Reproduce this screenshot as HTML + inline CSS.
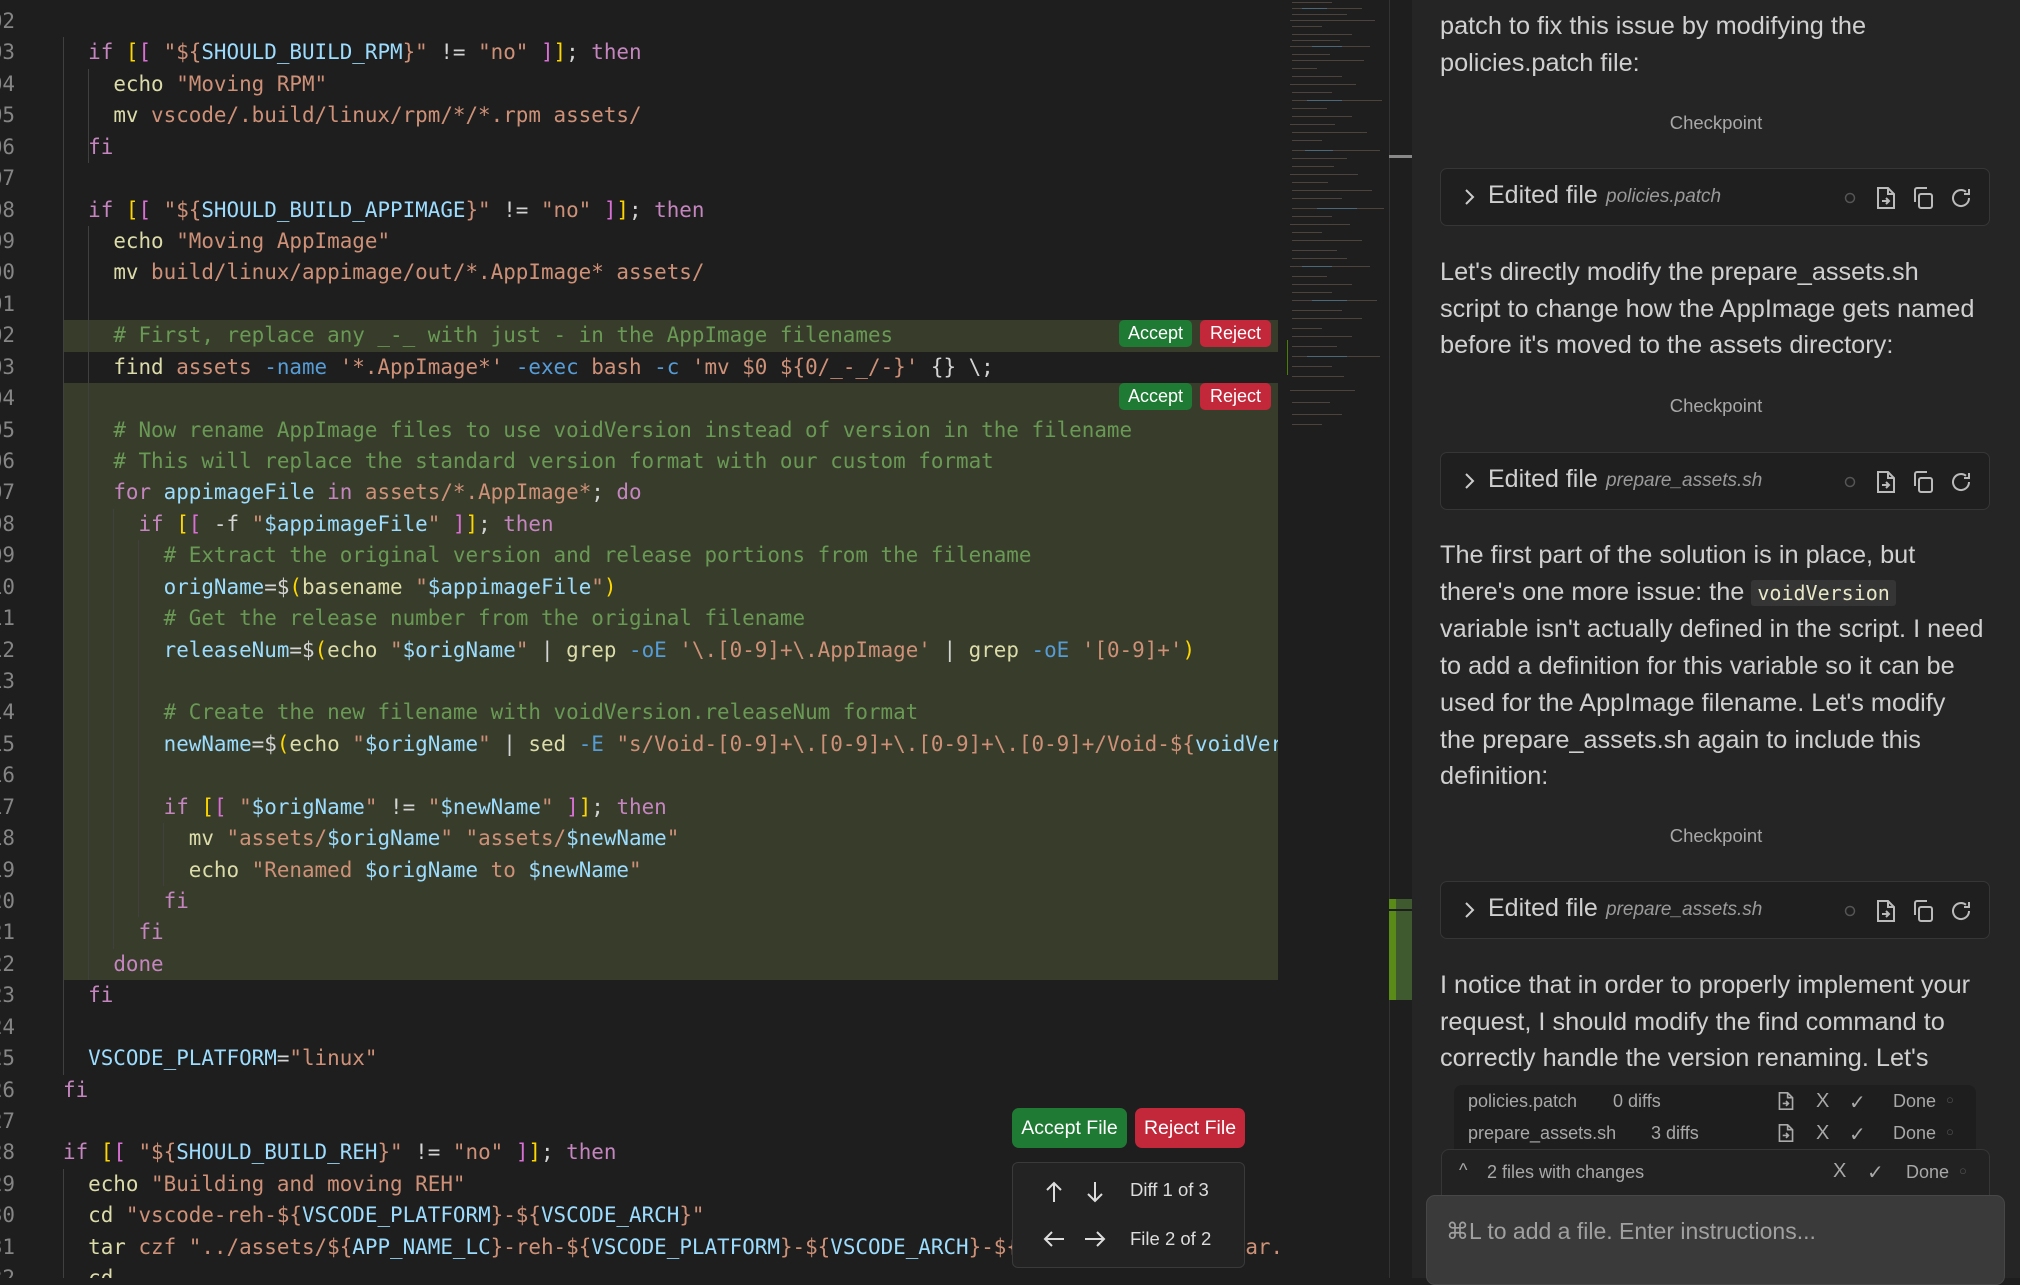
<!DOCTYPE html>
<html><head><meta charset="utf-8"><style>
*{margin:0;padding:0;box-sizing:border-box}
body{width:2020px;height:1278px;overflow:hidden;background:#1e1e1e;position:relative;font-family:"Liberation Sans",sans-serif}
.ed{position:absolute;left:0;top:0;width:1278px;height:1278px;overflow:hidden;background:#1e1e1e}
.row{position:absolute;left:0;width:1278px;height:31.43px;line-height:31.43px;font-family:"DejaVu Sans Mono",monospace;font-size:20.9px;white-space:pre;color:#d4d4d4}
.row .n{position:absolute;right:1263px;color:#858585;text-align:right}
.row .t{position:absolute;left:63px}
.hl{background:#373c2b}
.hl::before{content:"";position:absolute;left:0;width:63px;top:0;bottom:0;background:#1e1e1e}
.gb{position:absolute;left:25px;width:5px;background:#487e02}
.k{color:#c586c0}.s{color:#ce9178}.v{color:#9cdcfe}.c{color:#6a9955}.f{color:#dcdcaa}.o{color:#569cd6}.y{color:#ffd700}.p{color:#da70d6}
.guide{position:absolute;width:1px;background:#404040}
.btn{position:absolute;color:#fff;font-size:18px;text-align:center;border-radius:5px;line-height:27px;height:27px}
.ga{background:#1f7a34}.rr{background:#c3273a}
.panel{position:absolute;left:1412px;top:0;width:608px;height:1278px;background:#252526;color:#d0d0d0}
.p1{position:absolute;left:28px;font-size:25.3px;line-height:36.7px;white-space:nowrap}
.cp{position:absolute;left:0;width:608px;text-align:center;font-size:18.5px;color:#a8a8a8}
.card{position:absolute;left:28px;width:550px;height:58px;background:#1f1f1f;border:1px solid #363636;border-radius:7px}
.card .ch{position:absolute;left:22px;top:15px}
.card .ef{position:absolute;left:47px;top:12px;font-size:25px;color:#cfcfcf}
.card .fn{position:absolute;left:165px;top:17px;font-size:19px;font-style:italic;color:#9a9a9a}
.card svg.ic{position:absolute;top:17px}
.code{font-family:"DejaVu Sans Mono",monospace;font-size:20px;background:#353535;color:#e8e8c8;padding:1px 6px;border-radius:3px}
.fl{position:absolute;font-size:18px;color:#a8a8a8;white-space:nowrap}
</style></head><body>
<div class="ed">
<div class="gb" style="top:320px;height:32px"></div>
<div class="gb" style="top:383px;height:597px"></div>
<div class="row" style="top:6px"><span class="n">02</span></div>
<div class="row" style="top:37.4px"><span class="n">03</span><span class="t">  <span class="k">if</span> <span class="y">[</span><span class="p">[</span> <span class="s">"${</span><span class="v">SHOULD_BUILD_RPM</span><span class="s">}"</span> != <span class="s">"no"</span> <span class="p">]</span><span class="y">]</span>; <span class="k">then</span></span></div>
<div class="row" style="top:68.9px"><span class="n">04</span><span class="t">    <span class="f">echo</span> <span class="s">"Moving RPM"</span></span></div>
<div class="row" style="top:100.3px"><span class="n">05</span><span class="t">    <span class="f">mv</span> <span class="s">vscode/.build/linux/rpm/*/*.rpm assets/</span></span></div>
<div class="row" style="top:131.7px"><span class="n">06</span><span class="t">  <span class="k">fi</span></span></div>
<div class="row" style="top:163.2px"><span class="n">07</span></div>
<div class="row" style="top:194.6px"><span class="n">08</span><span class="t">  <span class="k">if</span> <span class="y">[</span><span class="p">[</span> <span class="s">"${</span><span class="v">SHOULD_BUILD_APPIMAGE</span><span class="s">}"</span> != <span class="s">"no"</span> <span class="p">]</span><span class="y">]</span>; <span class="k">then</span></span></div>
<div class="row" style="top:226px"><span class="n">09</span><span class="t">    <span class="f">echo</span> <span class="s">"Moving AppImage"</span></span></div>
<div class="row" style="top:257.4px"><span class="n">00</span><span class="t">    <span class="f">mv</span> <span class="s">build/linux/appimage/out/*.AppImage* assets/</span></span></div>
<div class="row" style="top:288.9px"><span class="n">01</span></div>
<div class="row hl" style="top:320.3px"><span class="n">02</span><span class="t">    <span class="c"># First, replace any _-_ with just - in the AppImage filenames</span></span></div>
<div class="row" style="top:351.7px"><span class="n">03</span><span class="t">    <span class="f">find</span> <span class="s">assets</span> <span class="o">-name</span> <span class="s">'*.AppImage*'</span> <span class="o">-exec</span> <span class="s">bash</span> <span class="o">-c</span> <span class="s">'mv $0 ${0/_-_/-}'</span> {} \;</span></div>
<div class="row hl" style="top:383.2px;height:597.2px"><span class="n">04</span></div>
<div class="row" style="top:414.6px"><span class="n">05</span><span class="t">    <span class="c"># Now rename AppImage files to use voidVersion instead of version in the filename</span></span></div>
<div class="row" style="top:446px"><span class="n">06</span><span class="t">    <span class="c"># This will replace the standard version format with our custom format</span></span></div>
<div class="row" style="top:477.4px"><span class="n">07</span><span class="t">    <span class="k">for</span> <span class="v">appimageFile</span> <span class="k">in</span> <span class="s">assets/*.AppImage*</span>; <span class="k">do</span></span></div>
<div class="row" style="top:508.9px"><span class="n">08</span><span class="t">      <span class="k">if</span> <span class="y">[</span><span class="p">[</span> -f <span class="s">"</span><span class="v">$appimageFile</span><span class="s">"</span> <span class="p">]</span><span class="y">]</span>; <span class="k">then</span></span></div>
<div class="row" style="top:540.3px"><span class="n">09</span><span class="t">        <span class="c"># Extract the original version and release portions from the filename</span></span></div>
<div class="row" style="top:571.7px"><span class="n">10</span><span class="t">        <span class="v">origName</span>=$<span class="y">(</span><span class="f">basename</span> <span class="s">"</span><span class="v">$appimageFile</span><span class="s">"</span><span class="y">)</span></span></div>
<div class="row" style="top:603.2px"><span class="n">11</span><span class="t">        <span class="c"># Get the release number from the original filename</span></span></div>
<div class="row" style="top:634.6px"><span class="n">12</span><span class="t">        <span class="v">releaseNum</span>=$<span class="y">(</span><span class="f">echo</span> <span class="s">"</span><span class="v">$origName</span><span class="s">"</span> | <span class="f">grep</span> <span class="o">-oE</span> <span class="s">'\.[0-9]+\.AppImage'</span> | <span class="f">grep</span> <span class="o">-oE</span> <span class="s">'[0-9]+'</span><span class="y">)</span></span></div>
<div class="row" style="top:666px"><span class="n">13</span></div>
<div class="row" style="top:697.4px"><span class="n">14</span><span class="t">        <span class="c"># Create the new filename with voidVersion.releaseNum format</span></span></div>
<div class="row" style="top:728.9px"><span class="n">15</span><span class="t">        <span class="v">newName</span>=$<span class="y">(</span><span class="f">echo</span> <span class="s">"</span><span class="v">$origName</span><span class="s">"</span> | <span class="f">sed</span> <span class="o">-E</span> <span class="s">"s/Void-[0-9]+\.[0-9]+\.[0-9]+\.[0-9]+/Void-${</span><span class="v">voidVersion</span></span></div>
<div class="row" style="top:760.3px"><span class="n">16</span></div>
<div class="row" style="top:791.7px"><span class="n">17</span><span class="t">        <span class="k">if</span> <span class="y">[</span><span class="p">[</span> <span class="s">"</span><span class="v">$origName</span><span class="s">"</span> != <span class="s">"</span><span class="v">$newName</span><span class="s">"</span> <span class="p">]</span><span class="y">]</span>; <span class="k">then</span></span></div>
<div class="row" style="top:823.2px"><span class="n">18</span><span class="t">          <span class="f">mv</span> <span class="s">"assets/</span><span class="v">$origName</span><span class="s">"</span> <span class="s">"assets/</span><span class="v">$newName</span><span class="s">"</span></span></div>
<div class="row" style="top:854.6px"><span class="n">19</span><span class="t">          <span class="f">echo</span> <span class="s">"Renamed </span><span class="v">$origName</span><span class="s"> to </span><span class="v">$newName</span><span class="s">"</span></span></div>
<div class="row" style="top:886px"><span class="n">20</span><span class="t">        <span class="k">fi</span></span></div>
<div class="row" style="top:917.4px"><span class="n">21</span><span class="t">      <span class="k">fi</span></span></div>
<div class="row" style="top:948.9px"><span class="n">22</span><span class="t">    <span class="k">done</span></span></div>
<div class="row" style="top:980.3px"><span class="n">23</span><span class="t">  <span class="k">fi</span></span></div>
<div class="row" style="top:1011.7px"><span class="n">24</span></div>
<div class="row" style="top:1043.2px"><span class="n">25</span><span class="t">  <span class="v">VSCODE_PLATFORM</span>=<span class="s">"linux"</span></span></div>
<div class="row" style="top:1074.6px"><span class="n">26</span><span class="t"><span class="k">fi</span></span></div>
<div class="row" style="top:1106px"><span class="n">27</span></div>
<div class="row" style="top:1137.4px"><span class="n">28</span><span class="t"><span class="k">if</span> <span class="y">[</span><span class="p">[</span> <span class="s">"${</span><span class="v">SHOULD_BUILD_REH</span><span class="s">}"</span> != <span class="s">"no"</span> <span class="p">]</span><span class="y">]</span>; <span class="k">then</span></span></div>
<div class="row" style="top:1168.9px"><span class="n">29</span><span class="t">  <span class="f">echo</span> <span class="s">"Building and moving REH"</span></span></div>
<div class="row" style="top:1200.3px"><span class="n">30</span><span class="t">  <span class="f">cd</span> <span class="s">"vscode-reh-${</span><span class="v">VSCODE_PLATFORM</span><span class="s">}-${</span><span class="v">VSCODE_ARCH</span><span class="s">}"</span></span></div>
<div class="row" style="top:1231.7px"><span class="n">31</span><span class="t">  <span class="f">tar</span> <span class="s">czf</span> <span class="s">"../assets/${</span><span class="v">APP_NAME_LC</span><span class="s">}-reh-${</span><span class="v">VSCODE_PLATFORM</span><span class="s">}-${</span><span class="v">VSCODE_ARCH</span><span class="s">}-${</span><span class="v">RELEASE_VERSION</span><span class="s">}.tar.gz"</span> .</span></div>
<div class="row" style="top:1263.2px"><span class="n">32</span><span class="t">  <span class="f">cd</span> ..</span></div>
<div class="guide" style="left:63px;top:37px;height:1038px"></div>
<div class="guide" style="left:88px;top:69px;height:94px"></div>
<div class="guide" style="left:88px;top:226px;height:754px"></div>
<div class="guide" style="left:113px;top:509px;height:440px"></div>
<div class="guide" style="left:138px;top:540px;height:377px"></div>
<div class="guide" style="left:163px;top:823px;height:63px"></div>
<div class="guide" style="left:63px;top:1169px;height:110px"></div>
<div class="btn ga" style="left:1119px;top:320px;width:73px">Accept</div>
<div class="btn rr" style="left:1200px;top:320px;width:71px">Reject</div>
<div class="btn ga" style="left:1119px;top:383px;width:73px">Accept</div>
<div class="btn rr" style="left:1200px;top:383px;width:71px">Reject</div>
<div class="btn ga" style="left:1012px;top:1108px;width:115px;height:40px;line-height:40px;font-size:19.5px;border-radius:7px">Accept File</div>
<div class="btn rr" style="left:1135px;top:1108px;width:110px;height:40px;line-height:40px;font-size:19.5px;border-radius:7px">Reject File</div>
<div style="position:absolute;left:1012px;top:1162px;width:233px;height:106px;background:#232323;border:1px solid #3a3a3a;border-radius:6px;color:#ddd;font-size:18.5px">
<svg style="position:absolute;left:31px;top:17px" width="20" height="24" viewBox="0 0 20 24" fill="none" stroke="#ddd" stroke-width="2"><path d="M10 22V3M3 10l7-7 7 7"/></svg>
<svg style="position:absolute;left:72px;top:17px" width="20" height="24" viewBox="0 0 20 24" fill="none" stroke="#ddd" stroke-width="2"><path d="M10 2v19M3 14l7 7 7-7"/></svg>
<span style="position:absolute;left:117px;top:16px">Diff 1 of 3</span>
<svg style="position:absolute;left:29px;top:66px" width="24" height="20" viewBox="0 0 24 20" fill="none" stroke="#ddd" stroke-width="2"><path d="M22 10H3M10 3l-7 7 7 7"/></svg>
<svg style="position:absolute;left:70px;top:66px" width="24" height="20" viewBox="0 0 24 20" fill="none" stroke="#ddd" stroke-width="2"><path d="M2 10h19M14 3l7 7-7 7"/></svg>
<span style="position:absolute;left:117px;top:65px">File 2 of 2</span>
</div>
</div>
<!-- minimap -->
<div style="position:absolute;left:1278px;top:0;width:134px;height:1278px;background:#1e1e1e">
<svg style="position:absolute;left:9px;top:0" width="100" height="440">
<g fill="#7a6a5a" opacity=".5">
<rect x="5" y="2" width="40" height="1"/><rect x="5" y="8" width="70" height="1"/><rect x="5" y="14" width="55" height="1"/><rect x="3" y="20" width="85" height="1"/><rect x="5" y="26" width="30" height="1"/><rect x="5" y="34" width="60" height="1"/><rect x="5" y="40" width="48" height="1"/><rect x="3" y="46" width="80" height="1"/><rect x="5" y="54" width="38" height="1"/><rect x="5" y="60" width="72" height="1"/><rect x="5" y="68" width="25" height="1"/><rect x="5" y="76" width="50" height="1"/><rect x="3" y="84" width="66" height="1"/><rect x="5" y="92" width="40" height="1"/><rect x="5" y="100" width="90" height="1"/><rect x="5" y="108" width="35" height="1"/><rect x="5" y="116" width="60" height="1"/><rect x="3" y="124" width="45" height="1"/><rect x="5" y="132" width="75" height="1"/><rect x="5" y="140" width="30" height="1"/><rect x="5" y="150" width="88" height="1"/><rect x="5" y="158" width="55" height="1"/><rect x="5" y="166" width="42" height="1"/><rect x="3" y="174" width="68" height="1"/><rect x="5" y="182" width="36" height="1"/><rect x="5" y="190" width="80" height="1"/><rect x="5" y="198" width="50" height="1"/><rect x="5" y="208" width="92" height="1"/><rect x="5" y="216" width="40" height="1"/><rect x="3" y="224" width="60" height="1"/><rect x="5" y="232" width="30" height="1"/><rect x="5" y="240" width="70" height="1"/><rect x="5" y="250" width="45" height="1"/><rect x="5" y="258" width="55" height="1"/><rect x="3" y="266" width="80" height="1"/><rect x="5" y="276" width="35" height="1"/><rect x="5" y="284" width="60" height="1"/><rect x="5" y="292" width="40" height="1"/><rect x="5" y="300" width="85" height="1"/><rect x="5" y="310" width="50" height="1"/><rect x="5" y="318" width="70" height="1"/><rect x="5" y="328" width="30" height="1"/><rect x="5" y="336" width="60" height="1"/><rect x="5" y="346" width="45" height="1"/><rect x="5" y="356" width="88" height="1"/><rect x="5" y="366" width="40" height="1"/><rect x="5" y="376" width="52" height="1"/><rect x="3" y="390" width="65" height="1"/><rect x="5" y="402" width="38" height="1"/><rect x="5" y="414" width="50" height="1"/><rect x="5" y="424" width="30" height="1"/>
</g>
<g fill="#4d7fa0" opacity=".6"><rect x="15" y="8" width="25" height="1"/><rect x="25" y="46" width="30" height="1"/><rect x="20" y="100" width="35" height="1"/><rect x="18" y="150" width="28" height="1"/><rect x="30" y="208" width="40" height="1"/><rect x="15" y="266" width="30" height="1"/><rect x="25" y="300" width="35" height="1"/><rect x="20" y="356" width="40" height="1"/></g>
<rect x="-1" y="340" width="2" height="35" fill="#487e02"/>
</svg>
<div style="position:absolute;left:111px;top:0;width:1px;height:1278px;background:#333"></div>
<div style="position:absolute;left:111px;top:155px;width:23px;height:3px;background:#888"></div>
<div style="position:absolute;left:111px;top:899px;width:23px;height:101px;background:#3f5a2e"></div>
<div style="position:absolute;left:111px;top:899px;width:7px;height:101px;background:#5a8a18"></div>
<div style="position:absolute;left:111px;top:909px;width:23px;height:2px;background:#1e1e1e"></div>
</div>
<div class="panel">
<div class="p1" style="top:8px">patch to fix this issue by modifying the<br>policies.patch file:</div>
<div class="cp" style="top:112px">Checkpoint</div>
<div class="card" style="top:168px">
<svg class="ch" width="14" height="26" viewBox="0 0 14 26" fill="none" stroke="#ccc" stroke-width="2"><path d="M3 6l7 7-7 7"/></svg>
<span class="ef">Edited file</span><span class="fn">policies.patch</span>
<svg class="ic" style="left:402px;top:22px" width="14" height="14"><circle cx="7" cy="7" r="4.5" fill="none" stroke="#555" stroke-width="1.5"/></svg>
<svg class="ic" style="left:434px" width="22" height="24" viewBox="0 0 22 24" fill="none" stroke="#bbb" stroke-width="2"><path d="M3 2h10l6 6v14H3z M13 2v6h6 M7 15h7M11 12l3 3-3 3"/></svg>
<svg class="ic" style="left:470px" width="24" height="24" viewBox="0 0 24 24" fill="none" stroke="#bbb" stroke-width="2"><rect x="8" y="8" width="13" height="14" rx="2"/><path d="M4 16V4a2 2 0 0 1 2-2h10"/></svg>
<svg class="ic" style="left:508px" width="24" height="24" viewBox="0 0 24 24" fill="none" stroke="#bbb" stroke-width="2"><path d="M20 12a8 8 0 1 1-3-6.2M20 3v5h-5"/></svg>
</div>
<div class="p1" style="top:254px">Let's directly modify the prepare_assets.sh<br>script to change how the AppImage gets named<br>before it's moved to the assets directory:</div>
<div class="cp" style="top:395px">Checkpoint</div>
<div class="card" style="top:452px">
<svg class="ch" width="14" height="26" viewBox="0 0 14 26" fill="none" stroke="#ccc" stroke-width="2"><path d="M3 6l7 7-7 7"/></svg>
<span class="ef">Edited file</span><span class="fn">prepare_assets.sh</span>
<svg class="ic" style="left:402px;top:22px" width="14" height="14"><circle cx="7" cy="7" r="4.5" fill="none" stroke="#555" stroke-width="1.5"/></svg>
<svg class="ic" style="left:434px" width="22" height="24" viewBox="0 0 22 24" fill="none" stroke="#bbb" stroke-width="2"><path d="M3 2h10l6 6v14H3z M13 2v6h6 M7 15h7M11 12l3 3-3 3"/></svg>
<svg class="ic" style="left:470px" width="24" height="24" viewBox="0 0 24 24" fill="none" stroke="#bbb" stroke-width="2"><rect x="8" y="8" width="13" height="14" rx="2"/><path d="M4 16V4a2 2 0 0 1 2-2h10"/></svg>
<svg class="ic" style="left:508px" width="24" height="24" viewBox="0 0 24 24" fill="none" stroke="#bbb" stroke-width="2"><path d="M20 12a8 8 0 1 1-3-6.2M20 3v5h-5"/></svg>
</div>
<div class="p1" style="top:537px">The first part of the solution is in place, but<br>there's one more issue: the <span class="code">voidVersion</span><br>variable isn't actually defined in the script. I need<br>to add a definition for this variable so it can be<br>used for the AppImage filename. Let's modify<br>the prepare_assets.sh again to include this<br>definition:</div>
<div class="cp" style="top:825px">Checkpoint</div>
<div class="card" style="top:881px">
<svg class="ch" width="14" height="26" viewBox="0 0 14 26" fill="none" stroke="#ccc" stroke-width="2"><path d="M3 6l7 7-7 7"/></svg>
<span class="ef">Edited file</span><span class="fn">prepare_assets.sh</span>
<svg class="ic" style="left:402px;top:22px" width="14" height="14"><circle cx="7" cy="7" r="4.5" fill="none" stroke="#555" stroke-width="1.5"/></svg>
<svg class="ic" style="left:434px" width="22" height="24" viewBox="0 0 22 24" fill="none" stroke="#bbb" stroke-width="2"><path d="M3 2h10l6 6v14H3z M13 2v6h6 M7 15h7M11 12l3 3-3 3"/></svg>
<svg class="ic" style="left:470px" width="24" height="24" viewBox="0 0 24 24" fill="none" stroke="#bbb" stroke-width="2"><rect x="8" y="8" width="13" height="14" rx="2"/><path d="M4 16V4a2 2 0 0 1 2-2h10"/></svg>
<svg class="ic" style="left:508px" width="24" height="24" viewBox="0 0 24 24" fill="none" stroke="#bbb" stroke-width="2"><path d="M20 12a8 8 0 1 1-3-6.2M20 3v5h-5"/></svg>
</div>
<div class="p1" style="top:967px">I notice that in order to properly implement your<br>request, I should modify the find command to<br>correctly handle the version renaming. Let's</div>
<!-- file list -->
<div style="position:absolute;left:42px;top:1085px;width:522px;height:75px;background:#1e1e1e;border-radius:8px 8px 0 0"></div>
<div class="fl" style="left:56px;top:1091px">policies.patch</div><div class="fl" style="left:201px;top:1091px">0 diffs</div>
<div class="fl" style="left:56px;top:1123px">prepare_assets.sh</div><div class="fl" style="left:239px;top:1123px">3 diffs</div>
<svg style="position:absolute;left:365px;top:1090px" width="18" height="22" viewBox="0 0 22 24" fill="none" stroke="#aaa" stroke-width="2"><path d="M3 2h10l6 6v14H3z M13 2v6h6 M7 15h7M11 12l3 3-3 3"/></svg>
<svg style="position:absolute;left:365px;top:1122px" width="18" height="22" viewBox="0 0 22 24" fill="none" stroke="#aaa" stroke-width="2"><path d="M3 2h10l6 6v14H3z M13 2v6h6 M7 15h7M11 12l3 3-3 3"/></svg>
<div class="fl" style="left:404px;top:1090px;font-size:20px">X</div><div class="fl" style="left:437px;top:1090px;font-size:20px">✓</div><div class="fl" style="left:481px;top:1091px">Done</div><div class="fl" style="left:534px;top:1092px;font-size:13px;color:#555">○</div>
<div class="fl" style="left:404px;top:1122px;font-size:20px">X</div><div class="fl" style="left:437px;top:1122px;font-size:20px">✓</div><div class="fl" style="left:481px;top:1123px">Done</div><div class="fl" style="left:534px;top:1124px;font-size:13px;color:#555">○</div>
<div style="position:absolute;left:29px;top:1149px;width:549px;height:60px;background:#222;border:1px solid #363636;border-radius:8px 8px 0 0"></div>
<div class="fl" style="left:47px;top:1160px">^</div>
<div class="fl" style="left:75px;top:1162px">2 files with changes</div>
<div class="fl" style="left:421px;top:1160px;font-size:20px">X</div><div class="fl" style="left:455px;top:1160px;font-size:20px">✓</div><div class="fl" style="left:494px;top:1162px">Done</div><div class="fl" style="left:547px;top:1163px;font-size:13px;color:#555">○</div>
<div style="position:absolute;left:14px;top:1195px;width:579px;height:90px;background:#3a3a3a;border:1px solid #474747;border-radius:9px"></div>
<div class="fl" style="left:34px;top:1218px;font-size:23px;color:#a0a0a0">⌘L to add a file. Enter instructions...</div>
</div>
</body></html>
